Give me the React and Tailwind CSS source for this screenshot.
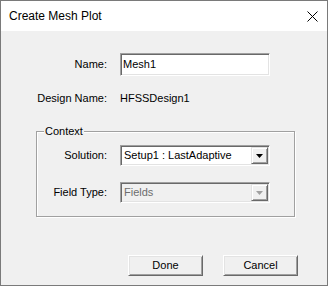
const FONT = { fontFamily: '"Liberation Sans", Arial, sans-serif' }

function Sunken({ className = '', children }) {
  return (
    <div
      className={
        'border border-t-[#a0a0a0] border-l-[#a0a0a0] border-b-white border-r-white shadow-[inset_1px_1px_0_#696969,inset_-1px_-1px_0_#e3e3e3] ' +
        className
      }
    >
      {children}
    </div>
  )
}

function Combo({ value, disabled }) {
  return (
    <Sunken
      className={
        'flex h-[21px] w-[150px] items-stretch p-[1px] ' +
        (disabled ? 'bg-[#f0f0f0]' : 'bg-white')
      }
    >
      <div
        className={
          'flex flex-1 items-center pl-[2px] text-[11px] leading-[13px] ' +
          (disabled ? 'text-[#6d6d6d]' : 'text-black')
        }
      >
        {value}
      </div>
      <div className="flex w-[17px] items-center justify-center border border-t-[#e3e3e3] border-l-[#e3e3e3] border-b-[#696969] border-r-[#696969] bg-[#f0f0f0] shadow-[inset_1px_1px_0_#fff,inset_-1px_-1px_0_#a0a0a0]">
        <svg width="7" height="4" viewBox="0 0 7 4">
          <path d="M0 0h7L3.5 4z" fill={disabled ? '#a0a0a0' : '#000'} />
        </svg>
      </div>
    </Sunken>
  )
}

function Button({ children }) {
  return (
    <button
      type="button"
      className="flex h-[21px] w-[75px] items-center justify-center border border-t-white border-l-white border-b-[#696969] border-r-[#696969] bg-[#f0f0f0] text-[11px] leading-[13px] text-black shadow-[inset_1px_1px_0_#e3e3e3,inset_-1px_-1px_0_#a0a0a0]"
    >
      {children}
    </button>
  )
}

export default function App() {
  return (
    <div
      style={FONT}
      className="flex h-[286px] w-[328px] flex-col border border-[#7a7a7a] bg-[#f0f0f0] text-black"
    >
      {/* title bar */}
      <div className="flex h-[30px] items-center justify-between bg-white pl-[8px] pr-[9px]">
        <span className="text-[12px] leading-[14px]">Create Mesh Plot</span>
        <svg width="11" height="11" viewBox="0 0 11 11">
          <path d="M0.5 0.5l10 10M10.5 0.5l-10 10" stroke="#000" strokeWidth="1" />
        </svg>
      </div>

      <div className="flex flex-1 flex-col pt-[22px] text-[11px] leading-[13px]">
        <div className="flex h-[23px] items-center">
          <div className="w-[106px] text-right">Name:</div>
          <Sunken className="ml-[13px] flex h-[23px] w-[150px] items-center bg-white pl-[2px]">
            Mesh1
          </Sunken>
        </div>

        <div className="mt-[11px] flex h-[23px] items-center">
          <div className="w-[106px] text-right">Design Name:</div>
          <div className="ml-[13px]">HFSSDesign1</div>
        </div>

        <div className="relative ml-[35px] mt-[21px] w-[259px] border border-[#a0a0a0] pt-[13px] pb-[13px] shadow-[inset_1px_1px_0_#fff,1px_1px_0_#fff]">
          <span className="absolute -top-[7px] left-[7px] bg-[#f0f0f0] px-[1px]">Context</span>
          <div className="flex items-center">
            <div className="w-[70px] text-right">Solution:</div>
            <div className="ml-[13px]">
              <Combo value="Setup1 : LastAdaptive" />
            </div>
          </div>
          <div className="mt-[16px] flex items-center">
            <div className="w-[70px] text-right">Field Type:</div>
            <div className="ml-[13px]">
              <Combo value="Fields" disabled />
            </div>
          </div>
        </div>

        <div className="mt-[38px] flex justify-end gap-[20px] pr-[29px]">
          <Button>Done</Button>
          <Button>Cancel</Button>
        </div>
      </div>
    </div>
  )
}
